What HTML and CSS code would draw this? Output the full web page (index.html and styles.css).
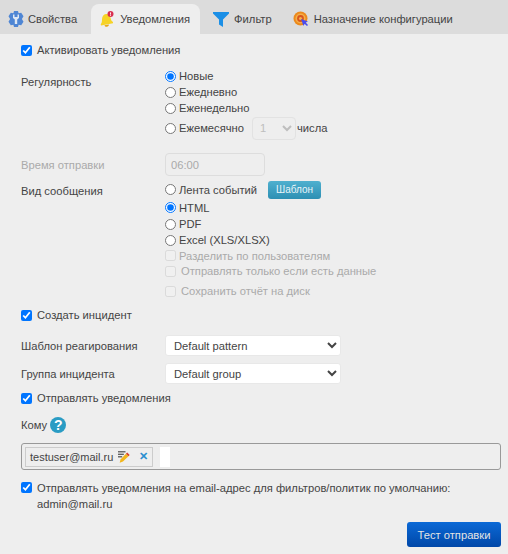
FILE: index.html
```html
<!DOCTYPE html>
<html lang="ru">
<head>
  <meta charset="UTF-8">
  <meta name="viewport" content="width=device-width, initial-scale=1.0">
  <title>Уведомления</title>
  <link rel="stylesheet" href="styles.css">
</head>
<body>

  <div class="tabs">
    <div class="tab tab-props">
      <svg class="tab-icon" viewBox="0 0 16 16">
        <path fill="#4f86d4" d="M6 0h4l.6 2.300 2.600-.5 2.300 3.400-1.600 2.800 1.600 2.800-2.300 3.400-2.600-.5L10 16H6l-.6-2.300-2.600.5L.5 10.800 2.100 8 .5 5.200l2.300-3.400 2.600.5z"/>
        <path fill="#dfe8f4" d="M5 3.500h1.500v2.500h3V3.500H11V7L9.200 8.500V13H6.800V8.500L5 7z"/>
      </svg>
      Свойства
    </div>
    <div class="tab tab-active">
      <svg class="tab-icon" viewBox="0 0 16 16">
        <path fill="#f6d326" d="M7 3c2.800-.5 4.200 1.500 4.600 4 .3 2 1 3.200 2.400 4v1.200L2 14.500 1.700 13.300C2.800 12 3 10.600 3 8.500 3 5.500 4.500 3.400 7 3z"/>
        <path fill="#e8a814" d="M5.500 14.200l4.400-.8c0 1.300-.8 2.200-2 2.400-1.200.2-2.100-.5-2.400-1.600z"/>
        <circle cx="11.500" cy="3" r="3" fill="#d9304f"/>
        <rect x="11.100" y="1.400" width=".9" height="2.200" fill="#fff"/>
        <rect x="11.100" y="4" width=".9" height=".8" fill="#fff"/>
      </svg>
      Уведомления
    </div>
    <div class="tab tab-filter">
      <svg class="tab-icon" viewBox="0 0 16 16"><path fill="#1b8fe6" d="M0 1h16v1.500L10 8.500V16l-4-2.500v-5L0 2.500z"/></svg>
      Фильтр
    </div>
    <div class="tab tab-assign">
      <svg class="tab-icon" viewBox="0 0 16 16">
        <circle cx="7.500" cy="7.500" r="7" fill="#ec8a1c"/>
        <circle cx="7.500" cy="7.500" r="5" fill="#f4b04a"/>
        <circle cx="7.500" cy="7.500" r="3.400" fill="#d9541e"/>
        <circle cx="7.500" cy="7.500" r="1.600" fill="#f4b04a"/>
        <path fill="#4a4df0" d="M8 8l7 2.500-2.300 1 2.300 2.500-1 1-2.500-2.300-1 2.300z"/>
      </svg>
      Назначение конфигурации
    </div>
  </div>

  <div class="content">
    <label class="check-line top-line"><input type="checkbox" checked> Активировать уведомления</label>

    <div class="row regularity">
      <div class="row-label">Регулярность</div>
      <div class="options">
        <label class="opt"><input type="radio" name="period" checked> Новые</label>
        <label class="opt"><input type="radio" name="period"> Ежедневно</label>
        <label class="opt"><input type="radio" name="period"> Еженедельно</label>
        <div class="opt monthly">
          <label class="opt"><input type="radio" name="period"> Ежемесячно</label>
          <select class="day-select" disabled><option>1</option></select>
          <span>числа</span>
        </div>
      </div>
    </div>

    <div class="row time-row">
      <div class="row-label muted">Время отправки</div>
      <input class="time-input" type="text" value="06:00" disabled>
    </div>

    <div class="row message-row">
      <div class="row-label">Вид сообщения</div>
      <div class="options">
        <div class="opt feed">
          <label class="opt"><input type="radio" name="kind"> Лента событий</label>
          <button class="template-btn" type="button">Шаблон</button>
        </div>
        <label class="opt opt-html"><input type="radio" name="kind" checked> HTML</label>
        <label class="opt"><input type="radio" name="kind"> PDF</label>
        <label class="opt"><input type="radio" name="kind"> Excel (XLS/XLSX)</label>
        <label class="opt muted split"><input type="checkbox" disabled> Разделить по пользователям</label>
        <label class="opt muted wide"><input type="checkbox" disabled> Отправлять только если есть данные</label>
        <label class="opt muted wide save"><input type="checkbox" disabled> Сохранить отчёт на диск</label>
      </div>
    </div>

    <label class="check-line incident"><input type="checkbox" checked> Создать инцидент</label>

    <div class="row select-row first-select">
      <div class="row-label">Шаблон реагирования</div>
      <select class="big-select"><option>Default pattern</option></select>
    </div>
    <div class="row select-row">
      <div class="row-label">Группа инцидента</div>
      <select class="big-select"><option>Default group</option></select>
    </div>

    <label class="check-line send"><input type="checkbox" checked> Отправлять уведомления</label>

    <div class="to-label">
      Кому
      <span class="help">?</span>
    </div>

    <div class="to-box">
      <div class="tag">
        testuser@mail.ru
        <svg class="tag-edit" viewBox="0 0 14 14">
          <rect x="0" y="0" width="9" height="1.500" fill="#555"/>
          <rect x="0" y="3" width="7" height="1.500" fill="#555"/>
          <rect x="0" y="6" width="5" height="1.500" fill="#555"/>
          <path fill="#f2b61c" d="M9.500 3l3 3-6.500 6.500-4 1.500 1-4z"/>
          <path fill="#d9402a" d="M9.500 3L11 1.500 14 4.500l-1.500 1.500z"/>
        </svg>
        <span class="tag-x">✕</span>
      </div>
      <div class="to-input"></div>
    </div>

    <label class="check-line default-mail"><input type="checkbox" checked> <span>Отправлять уведомления на email-адрес для фильтров/политик по умолчанию:<br>admin@mail.ru</span></label>

    <div class="actions">
      <button class="test-btn" type="button">Тест отправки</button>
    </div>
  </div>

</body>
</html>
```

FILE: styles.css
```css
body {
  margin: 0;
  font-family: "Liberation Sans", Arial, sans-serif;
  font-size: 11.2px;
  color: #444;
  background: #eee;
}

input[type="checkbox"], input[type="radio"] { width: 11px; height: 11px; margin: 0 5px 0 0; flex: none; }

.tabs { display: flex; height: 34px; padding-top: 4px; box-sizing: border-box; background: #dcdcdc; }
.tab { display: flex; align-items: center; gap: 5px; border-radius: 8px 8px 0 0; }
.tab-props { gap: 4px; padding: 0 14px 0 8px; }
.tab-active { padding: 0 10px 0 8px; background: #eee; }
.tab-filter { padding: 0 21px 0 13px; }
.tab-icon { width: 16px; height: 16px; }

.content { padding: 0 7px 0 21px; }
.check-line { display: flex; align-items: center; }
.top-line { margin-top: 9px; height: 14px; }

.row { display: flex; }
.row-label { width: 144px; flex: none; }
.muted { color: #aaa; }
.muted input { opacity: .55; }
.options { display: flex; flex-direction: column; }
.options input { margin-right: 3px; }
.opt { display: flex; align-items: center; height: 16px; }

.regularity { margin-top: 11px; }
.regularity .row-label { padding-top: 8px; }
.monthly { height: 24px; }
.monthly .opt { margin-right: 8px; }
.monthly span { margin-left: 1px; }
.day-select { width: 44px; height: 23px; font: inherit; color: #aaa; background: #eee; border: 1px solid #ddd; border-radius: 4px; padding-left: 3px; }

.time-row { margin-top: 13px; align-items: center; }
.time-input { width: 100px; height: 23px; box-sizing: border-box; padding: 0 5px; font: inherit; color: #aaa; background: #eee; border: 1px solid #ddd; border-radius: 4px; }

.message-row { margin-top: 0; }
.message-row .row-label { padding-top: 9px; }
.feed { height: 19px; margin-top: 4px; }
.feed .opt { margin-right: 11px; }
.template-btn { width: 53px; height: 18px; padding: 0; font: 10px "Liberation Sans", Arial, sans-serif; color: #e8f4f8; background: linear-gradient(#4fb0cf, #2d8fb3); border: none; border-radius: 3px; }
.opt-html { height: 17px; }
.split { height: 15px; }
.options .wide input { margin-right: 5px; }
.save { margin-top: 4px; }

.incident { margin-top: 8px; height: 16px; }

.select-row { align-items: center; }
.first-select { margin-top: 12px; }
.select-row + .select-row { margin-top: 7px; }
.big-select { width: 176px; height: 21px; padding-left: 4px; font: inherit; color: #444; background: #fff; border: 1px solid #e8e8e8; border-radius: 3px; }

.send { margin-top: 6px; height: 16px; }

.to-label { display: flex; align-items: center; gap: 3px; margin-top: 10px; height: 18px; }
.help { width: 16px; height: 16px; border-radius: 50%; background: #2a9cc4; color: #fff; font-size: 14px; font-weight: bold; line-height: 16px; text-align: center; }

.to-box { display: flex; align-items: center; gap: 7px; height: 27px; margin-top: 9px; padding: 0 3px; box-sizing: border-box; border: 1.5px solid #999; border-radius: 3px; }
.tag { display: flex; align-items: center; width: 128px; height: 20px; padding: 0 4px; box-sizing: border-box; border: 1px solid #ccc; background: #eee; font-size: 11px; }
.tag-edit { width: 14px; height: 14px; margin-left: 5px; }
.tag-x { margin-left: 9px; color: #2a8fd0; font-size: 11px; font-weight: bold; }
.to-input { width: 10px; height: 20px; background: #fff; }

.default-mail { align-items: flex-start; margin-top: 10px; line-height: 16px; }
.default-mail input { margin-top: 2px; }

.actions { display: flex; justify-content: flex-end; margin-top: 10px; }
.test-btn { width: 94px; height: 25px; padding: 0; font: inherit; color: #e4e4e4; background: linear-gradient(#0b69d6, #0047a8); border: none; border-radius: 3px; }
```
